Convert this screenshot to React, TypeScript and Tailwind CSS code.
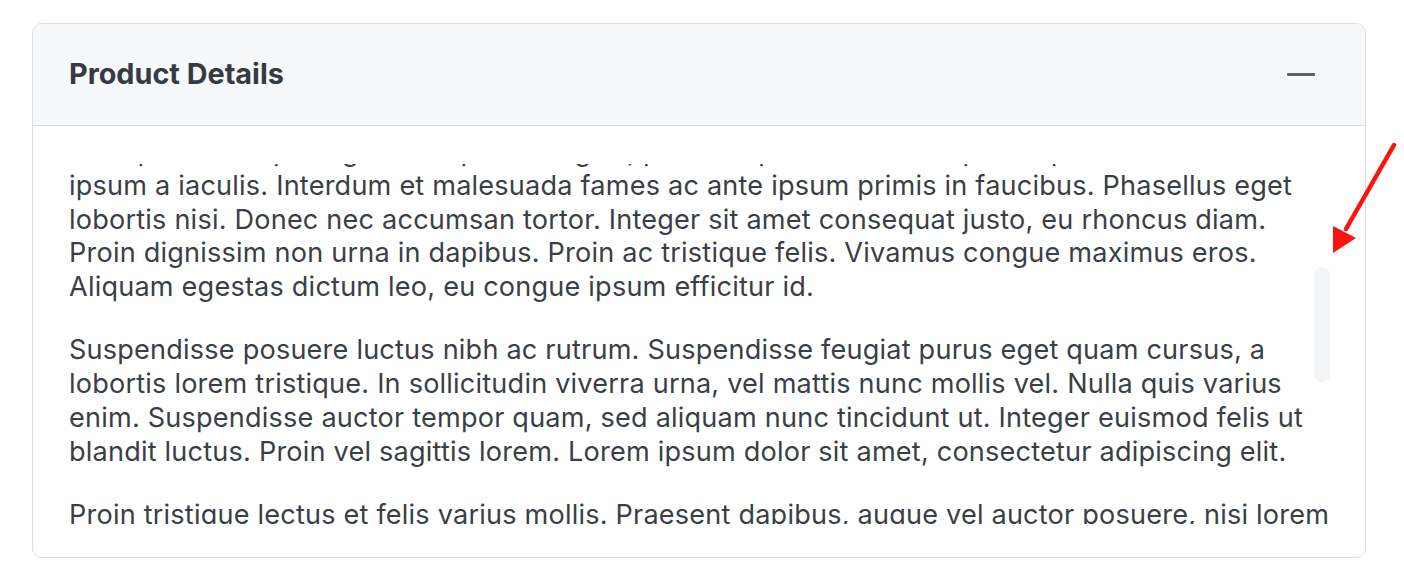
import * as React from "react";

// visual lines as they break in the panel
const paragraphs: string[][] = [
  [
    "Quisque consequat ligula vel quam fringilla, porta aliquet nunc. Sed quis turpis non erat",
    "ipsum a iaculis. Interdum et malesuada fames ac ante ipsum primis in faucibus. Phasellus eget",
    "lobortis nisi. Donec nec accumsan tortor. Integer sit amet consequat justo, eu rhoncus diam.",
    "Proin dignissim non urna in dapibus. Proin ac tristique felis. Vivamus congue maximus eros.",
    "Aliquam egestas dictum leo, eu congue ipsum efficitur id.",
  ],
  [
    "Suspendisse posuere luctus nibh ac rutrum. Suspendisse feugiat purus eget quam cursus, a",
    "lobortis lorem tristique. In sollicitudin viverra urna, vel mattis nunc mollis vel. Nulla quis varius",
    "enim. Suspendisse auctor tempor quam, sed aliquam nunc tincidunt ut. Integer euismod felis ut",
    "blandit luctus. Proin vel sagittis lorem. Lorem ipsum dolor sit amet, consectetur adipiscing elit.",
  ],
  [
    "Proin tristique lectus et felis varius mollis. Praesent dapibus, augue vel auctor posuere, nisi lorem",
    "tempus nibh, at fermentum ligula ipsum id neque. Morbi in lacus sed mi dignissim pulvinar.",
  ],
];

export default function App() {
  return (
    <div
      className="relative min-h-[586px] bg-white pt-[23px] pl-[32px] pr-[38px]"
      style={{ fontFamily: "Inter, 'Noto Sans', sans-serif" }}
    >
      {/* Card */}
      <div className="w-[1334px] h-[535px] rounded-[10px] border border-[#dcdde0] overflow-hidden flex flex-col">
        {/* Header */}
        <div className="h-[102px] shrink-0 bg-[#f7f8fa] border-b border-[#dcdde0] flex items-center justify-between pl-[36px] pr-[50px]">
          <h2 className="text-[28.8px] font-bold text-[#363b43] leading-none">Product Details</h2>
          <div className="w-[28px] h-[3px] bg-[#5c5f66] rounded-[1px]" />
        </div>

        {/* Body */}
        <div className="relative px-[36px] pt-[38px] pb-[32px]">
          <div className="h-[360px] overflow-hidden">
            <div className="-translate-y-[29px] text-[27.1px] leading-[33.8px] tracking-[0.2px] text-[#3a3f47]">
              {paragraphs.map((lines, i) => (
                <p key={i} className="mb-[29.2px]">
                  {lines.map((line, j) => (
                    <span key={j} className="block whitespace-nowrap">
                      {line}
                    </span>
                  ))}
                </p>
              ))}
            </div>
          </div>
          {/* overlay scrollbar thumb */}
          <div className="absolute left-[1281px] top-[141px] w-[16px] h-[115px] rounded-full bg-[#f4f5f7]" />
        </div>
      </div>

      {/* annotation arrow */}
      <svg className="absolute left-0 top-0 pointer-events-none" width="1404" height="586">
        <line x1="1394" y1="145" x2="1346" y2="229" stroke="#ff1111" strokeWidth="4.5" strokeLinecap="round" />
        <polygon points="1333,253 1333,226 1356,238" fill="#ff1111" />
      </svg>
    </div>
  );
}
